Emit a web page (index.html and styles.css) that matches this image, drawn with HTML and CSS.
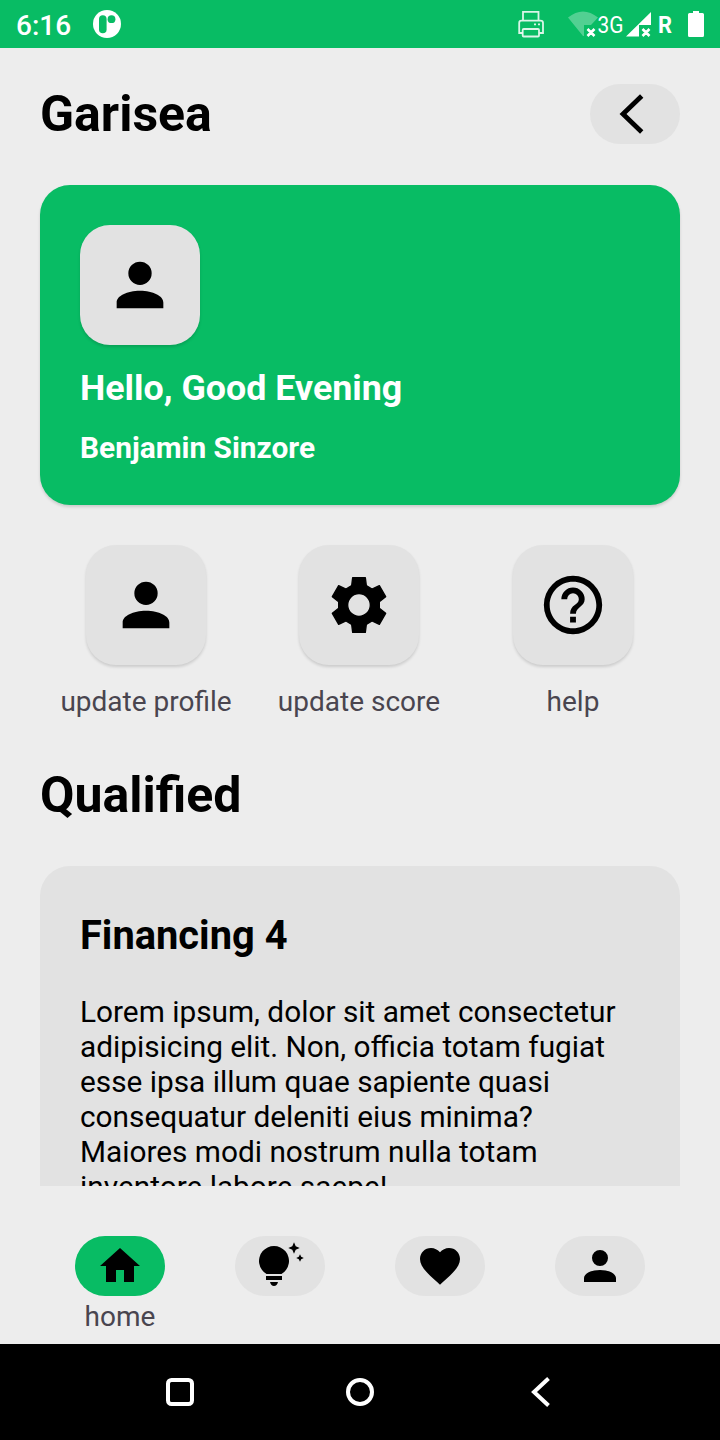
FILE: index.html
```html
<!DOCTYPE html>
<html lang="en">
<head>
<meta charset="utf-8">
<title>Garisea</title>
<link rel="stylesheet" href="styles.css">
</head>
<body>
<svg class="defs" aria-hidden="true">
  <symbol id="account" viewBox="0 0 24 24"><path d="M12,4A4,4 0 0,1 16,8A4,4 0 0,1 12,12A4,4 0 0,1 8,8A4,4 0 0,1 12,4M12,14C16.42,14 20,15.79 20,18V20H4V18C4,15.79 7.58,14 12,14Z"/></symbol>
</svg>
<div class="screen">
  <header class="status">
    <span class="clock">6:16</span>
    <svg class="app-dot" width="28" height="28" viewBox="0 0 28 28">
      <circle cx="14" cy="14" r="14" fill="#fff"/>
      <rect x="6" y="5.300" width="7.600" height="18" rx="3.800" fill="#08bc64"/>
      <circle cx="18.500" cy="9.200" r="3.900" fill="#08bc64"/>
    </svg>
    <svg class="status-icons" width="220" height="48" viewBox="0 0 220 48">
      <g fill="none" stroke="#fff" stroke-opacity=".85" stroke-width="1.800">
        <path d="M23 20.500V11.800H38.500V20.500M22.500 33H19.200V23Q19.200 20.700 21.500 20.700H40.500Q43 20.700 43 23V33H39.500"/>
        <rect x="22.700" y="29" width="16.300" height="7.500" rx="1"/>
        <path d="M34 24.300H36M38 24.300H40"/>
      </g>
      <path d="M68 17.500Q83 5.500 98 17.500L91 25H84V36H83Z" fill="#fff" fill-opacity=".3"/>
      <path d="M87.500 29L94.500 36M94.500 29L87.500 36M142.500 29L149.500 36M149.500 29L142.500 36" stroke="#fff" stroke-width="2.600"/>
      <text class="net" x="97.500" y="33" textLength="26" lengthAdjust="spacingAndGlyphs">3G</text>
      <path d="M151 12V25H139V36.500H126Z" fill="#fff"/>
      <text class="roam" x="158" y="33" textLength="14" lengthAdjust="spacingAndGlyphs">R</text>
      <path d="M193 11H199V13H202.500Q204 13 204 14.500V35.500Q204 37 202.500 37H189.500Q188 37 188 35.500V14.500Q188 13 189.500 13H193Z" fill="#fff"/>
    </svg>
  </header>

  <main class="content">
    <div class="topbar">
      <h1 class="title">Garisea</h1>
      <button class="pill" aria-label="Back">
        <svg width="90" height="60" viewBox="0 0 90 60"><path d="M51.700 12L33 30L51.700 48" fill="none" stroke="#000" stroke-width="4.800"/></svg>
      </button>
    </div>

    <section class="hero">
      <div class="tile"><svg width="70" height="70"><use href="#account"/></svg></div>
      <p class="greeting">Hello, Good Evening</p>
      <p class="user">Benjamin Sinzore</p>
    </section>

    <section class="actions">
      <div class="action">
        <div class="tile"><svg width="70" height="70"><use href="#account"/></svg></div>
        <span class="label">update profile</span>
      </div>
      <div class="action">
        <div class="tile"><svg width="70" height="70" viewBox="-105 -105 210 210"><path fill-rule="evenodd" stroke="#000" stroke-width="4" stroke-linejoin="round" d="M-19,-82L19,-82L22,-58L39,-48L61,-58L80,-25L61,-10L61,10L80,25L61,58L39,48L22,58L19,82L-19,82L-22,58L-39,48L-61,58L-80,25L-61,10L-61,-10L-80,-25L-61,-58L-39,-48L-22,-58ZM0,-34A34,34 0 1,0 0,34A34,34 0 1,0 0,-34Z"/></svg></div>
        <span class="label">update score</span>
      </div>
      <div class="action">
        <div class="tile"><svg width="70" height="70" viewBox="0 0 24 24"><path d="M11,18H13V16H11V18M12,2A10,10 0 0,0 2,12A10,10 0 0,0 12,22A10,10 0 0,0 22,12A10,10 0 0,0 12,2M12,20C7.59,20 4,16.41 4,12C4,7.59 7.59,4 12,4C16.41,4 20,7.59 20,12C20,16.41 16.41,20 12,20M12,6A4,4 0 0,0 8,10H10A2,2 0 0,1 12,8A2,2 0 0,1 14,10C14,12 11,11.75 11,15H13C13,12.75 16,12.5 16,10A4,4 0 0,0 12,6Z"/></svg></div>
        <span class="label">help</span>
      </div>
    </section>

    <h2 class="title section-title">Qualified</h2>

    <section class="list">
      <article class="offer">
        <h3 class="offer-title">Financing 4</h3>
        <p class="offer-text">Lorem ipsum, dolor sit amet consectetur adipisicing elit. Non, officia totam fugiat esse ipsa illum quae sapiente quasi consequatur deleniti eius minima? Maiores modi nostrum nulla totam inventore labore saepe!</p>
      </article>
    </section>
  </main>

  <nav class="tabs">
    <div class="tab">
      <div class="pill active"><svg width="48" height="48" viewBox="0 0 24 24"><path d="M10,20V14H14V20H19V12H22L12,3L2,12H5V20H10Z"/></svg></div>
      <span class="label">home</span>
    </div>
    <div class="tab">
      <div class="pill"><svg width="90" height="60" viewBox="0 0 90 60">
        <path d="M31.500 38A15 15 0 1 1 46.500 38ZM31 40H47V44H31ZM35 46H43Q42 50 39 50Q36 50 35 46Z"/>
        <path d="M59 6.300L60.700 10.300L64.700 12L60.700 13.700L59 17.700L57.300 13.700L53.300 12L57.300 10.300ZM65 18.200L66.200 20.800L68.800 22L66.200 23.200L65 25.800L63.800 23.200L61.200 22L63.800 20.800Z"/>
      </svg></div>
    </div>
    <div class="tab">
      <div class="pill"><svg width="48" height="48" viewBox="0 0 24 24"><path d="M12,21.35L10.55,20.03C5.4,15.36 2,12.27 2,8.5C2,5.41 4.42,3 7.5,3C9.24,3 10.91,3.81 12,5.08C13.09,3.81 14.76,3 16.5,3C19.58,3 22,5.41 22,8.5C22,12.27 18.6,15.36 13.45,20.03L12,21.35Z"/></svg></div>
    </div>
    <div class="tab">
      <div class="pill"><svg width="48" height="48"><use href="#account"/></svg></div>
    </div>
  </nav>

  <footer class="system">
    <svg width="48" height="48" viewBox="0 0 48 48"><rect x="12" y="12" width="24" height="24" rx="3.500"/></svg>
    <svg width="48" height="48" viewBox="0 0 48 48"><circle cx="24" cy="24" r="12"/></svg>
    <svg width="48" height="48" viewBox="0 0 48 48"><path d="M32.500 10.500L18 24L32.500 37.500"/></svg>
  </footer>
</div>
</body>
</html>
```
FILE: styles.css
```css
* { box-sizing: border-box; }
body {
  margin: 0;
  background: #ededed;
  color: #000;
  font-family: Roboto, "Liberation Sans", sans-serif;
}
svg { display: block; flex: none; }
h1, h2, h3, p { margin: 0; }
.defs { display: none; }
.screen {
  display: flex;
  flex-direction: column;
  width: 720px;
  height: 1440px;
  overflow: hidden;
}
.status {
  display: flex;
  align-items: center;
  flex: none;
  height: 48px;
  padding-left: 16px;
  background: #08bc64;
  color: #fff;
}
.clock {
  width: 77px;
  padding-top: 2px;
  font-size: 28px;
  font-weight: 500;
}
.status-icons { margin-left: auto; }
.net { font-size: 24.5px; fill: #fff; }
.roam { font-size: 24.5px; font-weight: 700; fill: #fff; }
.content {
  flex: none;
  height: 1138px;
  padding: 36px 40px 0;
  overflow: hidden;
}
.topbar {
  display: flex;
  justify-content: space-between;
  align-items: center;
  height: 60px;
}
.title { font-size: 50px; font-weight: 700; line-height: 60px; }
.pill {
  display: flex;
  justify-content: center;
  align-items: center;
  width: 90px;
  height: 60px;
  padding: 0;
  border: 0;
  border-radius: 30px;
  background: #e2e2e2;
}
.pill.active { background: #08bc64; }
.hero {
  height: 320px;
  margin-top: 41px;
  padding: 40px;
  border-radius: 30px;
  background: #08bc64;
  color: #fff;
  box-shadow: 0 2px 3px rgba(0, 0, 0, .14);
}
.tile {
  display: flex;
  justify-content: center;
  align-items: center;
  width: 120px;
  height: 120px;
  border-radius: 30px;
  background: #e2e2e2;
  box-shadow: 0 2px 3px rgba(0, 0, 0, .14);
}
.greeting { margin-top: 22px; font-size: 35.8px; font-weight: 700; line-height: 42px; }
.user { margin-top: 21px; font-size: 29.85px; font-weight: 700; line-height: 36px; }
.actions {
  display: grid;
  grid-template-columns: 212px 214px 214px;
  margin-top: 40px;
}
.action, .tab { display: flex; flex-direction: column; align-items: center; }
.label { color: #49454f; font-size: 28px; line-height: 40px; }
.action .label { margin-top: 17px; }
.tab .label { margin-top: 1px; }
.section-title { margin-top: 43px; }
.list { margin-top: 41px; }
.offer {
  height: 420px;
  padding: 46px 40px;
  border-radius: 30px;
  background: #e2e2e2;
}
.offer-title { font-size: 39.85px; font-weight: 700; line-height: 48px; }
.offer-text { margin-top: 34px; font-size: 29.8px; line-height: 35px; }
.tabs {
  display: grid;
  grid-template-columns: repeat(4, 1fr);
  flex: none;
  height: 158px;
  padding: 50px 40px 0;
}
.system {
  display: flex;
  justify-content: center;
  align-items: center;
  gap: 132px;
  flex: 1;
  background: #000;
}
.system svg { fill: none; stroke: #fff; stroke-width: 4px; }
```
